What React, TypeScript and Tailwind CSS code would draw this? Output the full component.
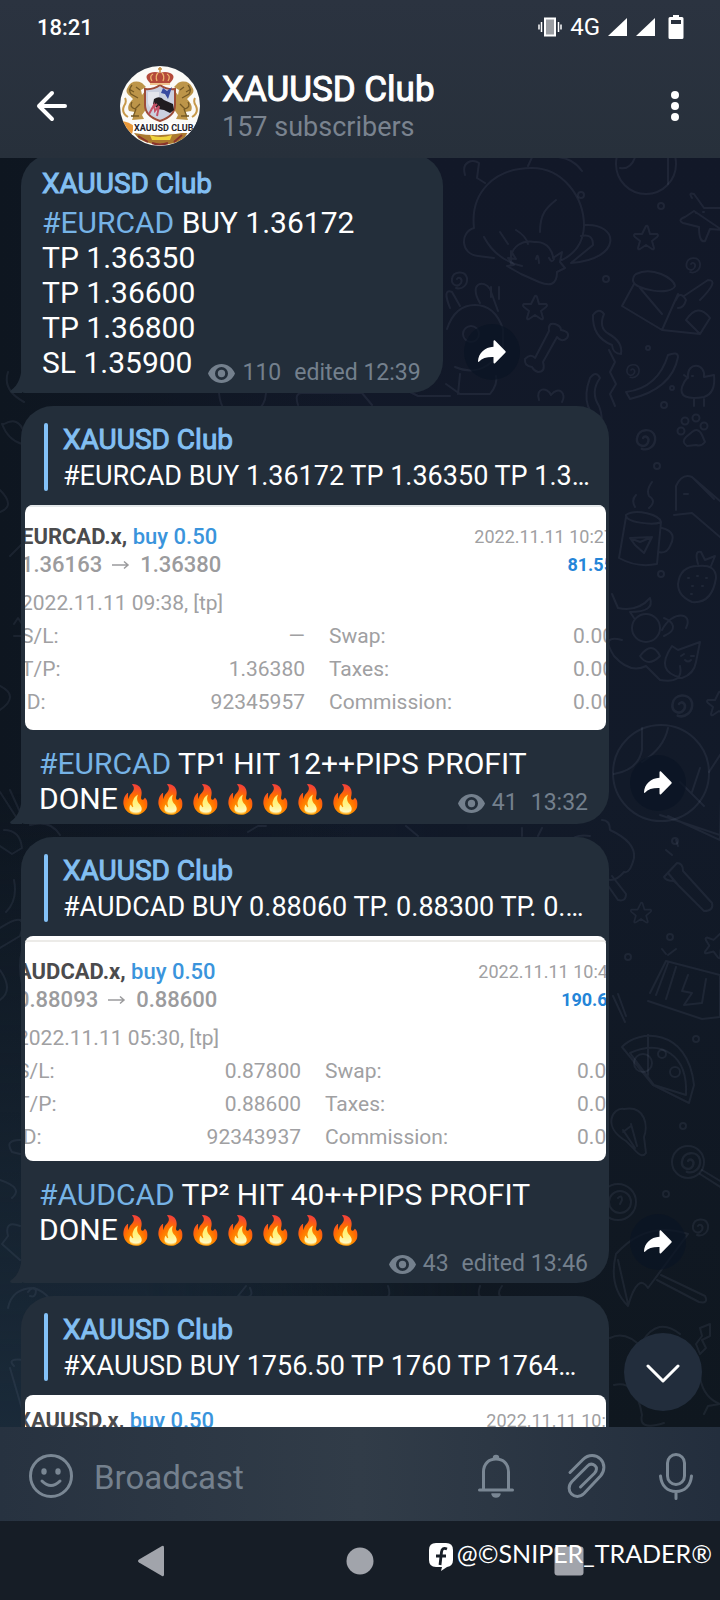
import React from "react";

const FLAMES = "🔥🔥🔥🔥🔥🔥🔥";

type Trade = {
  symbol: string;
  volume: string;
  open: string;
  close: string;
  closedAt: string;
  openedAt: string;
  profit: string;
  rows: [string, string, string, string][];
  frame: string;
};

const TRADES: Record<string, Trade> = {
  eurcad: {
    symbol: "EURCAD.x,",
    volume: "buy 0.50",
    open: "1.36163",
    close: "1.36380",
    closedAt: "2022.11.11 10:27",
    openedAt: "2022.11.11 09:38, [tp]",
    profit: "81.55",
    rows: [
      ["S/L:", "—", "Swap:", "0.00"],
      ["T/P:", "1.36380", "Taxes:", "0.00"],
      ["ID:", "92345957", "Commission:", "0.00"],
    ],
    frame: "-ml-1 -mr-2 pt-4 border-t-2 border-[#e4e8ea]",
  },
  audcad: {
    symbol: "AUDCAD.x,",
    volume: "buy 0.50",
    open: "0.88093",
    close: "0.88600",
    closedAt: "2022.11.11 10:44",
    openedAt: "2022.11.11 05:30, [tp]",
    profit: "190.60",
    rows: [
      ["S/L:", "0.87800", "Swap:", "0.00"],
      ["T/P:", "0.88600", "Taxes:", "0.00"],
      ["ID:", "92343937", "Commission:", "0.00"],
    ],
    frame: "-ml-2 -mr-3 mt-1 pt-4 border-t-2 border-[#ecebe8]",
  },
  xauusd: {
    symbol: "XAUUSD.x,",
    volume: "buy 0.50",
    open: "1756.50",
    close: "1764.00",
    closedAt: "2022.11.11 10:52",
    openedAt: "2022.11.11 10:02, [tp]",
    profit: "375.00",
    rows: [
      ["S/L:", "—", "Swap:", "0.00"],
      ["T/P:", "1764.00", "Taxes:", "0.00"],
      ["ID:", "92346120", "Commission:", "0.00"],
    ],
    frame: "-ml-2 -mr-5 pt-3",
  },
};

function TradeCard({ trade }: { trade: Trade }) {
  return (
    <div className="ml-1 mr-[3px] h-[225px] overflow-hidden rounded-lg bg-white text-[21px] text-[#a0a0a2]">
      <div className={trade.frame}>
        <div className="flex justify-between">
          <div className="text-[22px] leading-7 whitespace-nowrap">
            <div className="font-medium text-[#3a94dc]">
              <strong className="font-bold text-[#4b4b4d]">{trade.symbol}</strong> {trade.volume}
            </div>
            <div className="flex items-center gap-[10px] font-medium text-[#9b9b9d]">
              <span>{trade.open}</span>
              <svg viewBox="0 0 18 10" className="h-[10px] w-[18px]" fill="none" stroke="currentColor" strokeWidth="1.5">
                <path d="M0 5H16M12 1.5 16 5 12 8.500" />
              </svg>
              <span>{trade.close}</span>
            </div>
          </div>
          <div className="text-right text-[18px] leading-7 whitespace-nowrap">
            <div>{trade.closedAt}</div>
            <div className="font-bold text-[#2485d8]">{trade.profit}</div>
          </div>
        </div>
        <div className="mt-2 leading-[33px]">{trade.openedAt}</div>
        <table className="w-full table-fixed leading-[33px]">
          <tbody>
            {trade.rows.map(([a, b, c, d]) => (
              <tr key={a}>
                <th scope="row" className="w-[62px] p-0 text-left font-normal">{a}</th>
                <td className="w-[222px] p-0 text-right">{b}</td>
                <th scope="row" className="p-0 pl-6 text-left font-normal">{c}</th>
                <td className="p-0 text-right">{d}</td>
              </tr>
            ))}
          </tbody>
        </table>
      </div>
    </div>
  );
}

function Meta({ views, time }: { views: string; time: string }) {
  return (
    <span className="flex items-center gap-[7px] text-[23px] leading-7 whitespace-pre text-[#74808d]">
      <svg viewBox="0 0 27 19" className="h-[19px] w-[27px]" aria-hidden="true">
        <path fill="currentColor" fillRule="evenodd" d="M13.500 0C7.400 0 2.200 3.900 0 9.500 2.200 15.100 7.400 19 13.500 19S24.800 15.100 27 9.500C24.800 3.900 19.600 0 13.500 0Zm0 16A6.500 6.500 0 1 1 13.500 3a6.500 6.500 0 0 1 0 13Zm0-2.800a3.700 3.700 0 1 0 0-7.400 3.700 3.700 0 0 0 0 7.400Z" />
      </svg>
      <span>{views}</span>
      <span className="pl-[6px]">{time}</span>
    </span>
  );
}

function Tail() {
  return (
    <svg viewBox="0 0 12 30" className="absolute bottom-0 -left-[11px] h-[30px] w-3" aria-hidden="true">
      <path d="M12 0C11.500 13 9 22 .6 27.500-.3 28.600.3 30 2 30H12Z" fill="#232e3a" />
    </svg>
  );
}

function Row({ wide, children }: { wide?: boolean; children: React.ReactNode }) {
  return (
    <article className="flex items-end gap-[21px] pr-[34px] pl-[21px]">
      <div
        className={
          (wide ? "min-w-0 flex-1 " : "") +
          "relative rounded-t-[32px] rounded-br-[32px] rounded-bl-sm bg-[#232e3a]"
        }
      >
        {children}
        <Tail />
      </div>
      <button aria-label="Share" className="mb-[13px] flex size-14 shrink-0 items-center justify-center rounded-full bg-[#0a1423]/70 text-white">
        <svg viewBox="0 0 28 24" className="h-6 w-7" fill="currentColor">
          <path d="M15.500 1.200c0-.9.9-1.300 1.500-.7l10.300 10.400c.6.600.6 1.300 0 1.900L17 23.300c-.6.600-1.500.2-1.500-.7V17C9 16.800 4 18.200 1.200 21.600c-.5.600-1.300.3-1.200-.5C.6 13 6.500 7.300 15.500 6.700Z" />
        </svg>
      </button>
    </article>
  );
}

function SenderName() {
  return (
    <div className="text-[28px] leading-[34px] font-normal text-[#82bff2] [-webkit-text-stroke:1px_currentColor]">XAUUSD Club</div>
  );
}

function Reply({ text }: { text: string }) {
  return (
    <div className="pt-[17px] pr-3 pb-[14px] pl-[23px]">
      <blockquote className="flex h-[68px] gap-[15px]">
        <span className="w-1 shrink-0 rounded-full bg-[#83c1f7]" />
        <div className="min-w-0 flex-1">
          <SenderName />
          <div className="truncate text-[27px] leading-[39px]">{text}</div>
        </div>
      </blockquote>
    </div>
  );
}

function Tag({ children }: { children: string }) {
  return <a href="#tag" className="text-[#76b3e6]">{children}</a>;
}

function Emojis() {
  return <span className="text-[28px] leading-none">{FLAMES}</span>;
}

const Spiral = ({ x, y, s = 1 }: { x: number; y: number; s?: number }) => (
  <path transform={`translate(${x} ${y}) scale(${s})`} d="M0 0c2-3 6 0 4 4-3 5-10 2-9-4 1-8 13-9 15-1 1 7-5 12-11 10" />
);
const Star = ({ x, y, s = 1, r = 0 }: { x: number; y: number; s?: number; r?: number }) => (
  <path transform={`translate(${x} ${y}) rotate(${r}) scale(${s})`} d="M0-12Q1-13 2-11L4-4 11-4Q13-3 11-1L6 3 8 10Q8 12 6 11L0 7-6 11Q-8 12-8 10L-6 3-11-1Q-13-3-11-4L-4-4Z" />
);

function Doodles() {
  return (
    <svg viewBox="0 158 720 1269" preserveAspectRatio="xMidYMin slice" className="absolute inset-0 h-full w-full" aria-hidden="true" fill="none" stroke="#8fa0bc" strokeOpacity=".1" strokeWidth="2" strokeLinecap="round" strokeLinejoin="round">
      <path d="M474 228c-4-35 20-60 58-60 30 0 52 28 52 58-1 24-18 32-22 34M474 228c-14 4-14 26 4 28l16 2M484 237q12 23 38 29M585 225c34-2 38 34-14 38l22-18q0-12-12-9M465 175c-4-14 8-16 14-12l-2 15 8 5M528 166l6-13m24 4q16 2 24 14M540 232c0-18 6-24 16-32" />
      <path d="M511 264c-2-20 14-24 24-22 14-1 18 12 18 16l9-6-2 10 5 6-8 4c0 14-8 14-18 10l-18-8-14-8 7-1-6-7 8 1-5-8ZM536 259q2-8 3 4M549 258q3 6 5 1M500 232l8 12m8-14q10 6 12 14" />
      <circle cx="646" cy="164" r="30" /><path d="M620 168q12 2 16-14M668 144v40" />
      <path d="M692 198q-4-6 2-4l10 14h18m0 22-12-1-5 12q-6 2-6-14l-16-4q-6-3 2-6l9-6ZM696 213h1m6-1h1" />
      <Star x={646} y={238} /><Star x={535} y={308} /><Spiral x={457} y={279} /><Spiral x={691} y={264} s={0.900} />
      <path d="M636 274c16-8 38 4 39 12-4 10-40 4-42-5q0-5 3-7Zm-2 10-12 22 40 24 16-36M640 288l22 26m22-18 24-16q12 0-8 20M662 330l38 4 10-16q-12-16-24 2l14 14M676 300q4-10 10 0-2 8-8 8" />
      <path d="M447 329q8-24 28-24t28 24v20q-20 30-48 18M450 308q-8-20 2-16l8 14m20-3c-12-20 4-24 10-14l8 22m-7-14v-10m8 12v-12M446 384l14 10h30q8-10 6-18M460 374l-2 20" /><circle cx="471" cy="334" r="8" />
      <path d="M549 331q-1-9 6-7 6 2 6 6 10 2 6 8-5 5-10-1l-14 25q3 10-5 10-4-1-6-5-8-1-7-8 6-6 10-1Z" />
      <path d="M593 315q6-8 11-1-6 14 5 20 14 8 12 20-8 0-9-9-20-8-19-30ZM590 378q6-8 10 0-10 14-1 28 6 16-2 20m-7-48q-6 16-2 28l8 18M609 350l6 12-5 10 6 12-6 10 5 12M626 392q32-4 42-37 10-4 10 2-6 32-48 42Z" />
      <Spiral x={631} y={370} s={0.800} /><circle cx="648" cy="348" r="2" /><circle cx="672" cy="388" r="2" /><circle cx="664" cy="405" r="3" />
      <path d="M688 377c-1-16 18-14 16 0l10-2q2 18-10 22-26 4-22-10 2-6 6-10ZM684 375l4 3m6 21v7m10-7v7M692 376h1" />
      <Spiral x={643} y={438} s={1.200} /><path d="M539 400c-4-12 8-14 12-5 8-10 16-1 11 7" />
      <path d="M692 424q6-5 10 3l3 7q-4 5-9 3l-9 1q-6-4-1-9Z" transform="translate(0 8)" /><circle cx="681" cy="431" r="3.500" /><circle cx="685" cy="421" r="3.500" /><circle cx="696" cy="418" r="3.500" /><circle cx="704" cy="426" r="3.500" />
      <path d="M676 510v-24q6-13 16-9l28 24m0 36-28-24-18 2M692 477l22 22M684 494h4" />
      <path d="M626 515c10-7 34 0 35 7-8 4-36 0-35-7Zm0 2-7 41q18 10 38 6l4-42m1 6q16 4 8 18-3 8-12 6M630 538l22-1-8 16-9-8Zm0 0 10 4 12-5M635 507q-4-7 1-12m13 13q8-7 0-12-3-6 3-14" />
      <path d="M678 584q2-18 20-18 18-2 18 12-4 26-24 24-14-6-14-18ZM698 564q-4-14 3-12l4 8 10-4-4 10M688 578h1m8-2h1m8 2h1m-15 8h1m9 0h1m-12 8h1" />
      <circle cx="646" cy="628" r="14" /><path d="M612 594l6 14q20 4 32-10 5 14-20 14l4 6m28 12c10-20 32-18 24-2m-22 8c14-6 10-14 0-18M622 640q-22-6-8 16 16 18 32 10l14 14q24 4 20-14M672 646l6 4 22-8-4 20q-2 12-14 16-28-6-10-32ZM681 656l3-2m7 2h3m-9 4q3 3 6 0M640 656q12-16 20 0-12 12-20 0Z" />
      <Spiral x={679} y={704} s={1.300} /><Star x={719} y={704} />
      <circle cx="661" cy="773" r="48" /><path d="M642 728v22q-4 20-28 24m54-46q-4 20-26 34M709 772l13-20-2 88-52-24m-8-1 60 20M704 806l-24-24m12 10 8-24" />
      <path d="M602 820q8 0 8 10 26 12 24 28-4 16-10 14-10 12-20 6m8-2 14 18q0 8-8 6l-14-20" />
      <path d="m664 877 13-14q6 0 6 8l29 32q2 8-8 8l-30-30q-8 0-10-4Zm4-4 10 12M672 855l-6-5m12-4-2-6" />
      <Star x={641} y={913} s={0.850} /><circle cx="670" cy="937" r="3" /><circle cx="628" cy="957" r="3" /><Star x={716} y={945} r={20} />
      <path d="M650 993l16-32 54 14v42l-18 2-54-18m20-38-12 32m20-28-10 32M688 975l-6 16 10 2-8 12 18-2 4-24M668 955l8-6m-14 0 4 5M618 994l8 22m-13-20 12 26" />
      <path d="M622 1047c16-18 66-20 72 38l-5 18-36-18Zm8 6 24 32 32 10c2-40-24-56-56-42M648 1035v40" /><circle cx="643" cy="1063" r="9" /><circle cx="662" cy="1054" r="4" /><circle cx="675" cy="1072" r="5" />
      <path d="m634 1149-8-8c-24-14-14-34-2-32 22-4 24 18 20 28l2 16q-4 6-12-4ZM623 1130l12 18m-4-24 6 22m-14-14 8-6" />
      <circle cx="688" cy="1162" r="16" /><Spiral x={688} y={1161} s={1.200} /><path d="M702 1170l20 12m-22-8 22 14" />
      <circle cx="618" cy="1202" r="18" /><circle cx="620" cy="1202" r="11" /><path d="M618 1198q4-4 4 2l-2 4" /><Spiral x={698} y={1226} />
      <path d="M616 1254q30-34 72-20l-40 54q-10-16-20 18-20-20-12-52Zm45 21 44 21q4 8-6 6l-42-22M618 1260l10 44" />
      <path d="M700 1328l10-4v12l-8 4 4 8-6 6-4-10 6-8ZM610 1338q16-8 32 10m0-6q16-26 38-8M700 1378q4 20 20 26l-12 2-4 8M614 1385q22-6 28 30-4 16 22 8" />
      <path d="M8 1308q4-20 26-20 18 6 22 26M28 1292q4-6 8-2 0 8-6 6M14 1366q-8-8 10-6l10 6M10 1368l14 48M4 424q14-8 20 8l-2 12q-14-4-20-20ZM0 490q16 16 0 22M10 556l12-12m-8 80 4-6 4 6 6-2-4 8 4 6H14M0 686q20 10 0 24M10 790l10 22M0 792l18 28M4 830q16 0 18 18l-10 6-12-8M14 880q4 20-8 32M0 928q30-20 20 8L0 948M22 950q-4 16 0 34M0 970q14 20 0 30M20 1140q-16 0-8 12l8 2M0 1180q24 8 12 18M20 1226q-16-6-12 10l-6 8 18 16" />
      <path d="M8 372q-6 18 16 30M219 393q2 24 22 24 24-4 25-24M298 405q-4-12 4-12h60l10 12M410 392l8 4h32M30 825q20-6 30 10M248 832l10-6h8m140 0 12 10m104-8v8m16 0 4-8m28 14q4-8 20-6M246 1286l-8 10q18 4 12-8M388 1286q4 12-4 12h54M480 1286q-4 12 4 12m18-12q-6 8 0 12" />
      <circle cx="581" cy="195" r="3" /><circle cx="661" cy="206" r="3" /><circle cx="606" cy="279" r="3" /><circle cx="657" cy="466" r="3" /><circle cx="661" cy="574" r="3" /><circle cx="675" cy="841" r="3" /><circle cx="696" cy="1039" r="3" /><circle cx="683" cy="1126" r="3" /><circle cx="666" cy="1194" r="3" />
    </svg>
  );
}

function Avatar() {
  const lion = (
    <g>
      <path d="M22 17c-6-3-12-1-14 4-3 4-1 7 2 9l3 3c-4 4-6 8-4 12l6 1-3 8 12-1-2-4 5-7-2-8 6-9-5-1-4 5-1-5 5-3Z" fill="#bd9549" />
      <path d="M12 19q-4 5-1 9l7 4m-6 4q-3 5 3 7l5-5m-4-17 4 3m-9 26h8M9 23l5 3m2 17-3 8" fill="none" stroke="#765a25" strokeWidth="1.300" />
      <path d="M8 51q-7-4-4-11 3-4 1-8" fill="none" stroke="#c7994b" strokeWidth="2" />
    </g>
  );
  return (
    <svg viewBox="0 0 80 80" className="size-20 shrink-0 rounded-full bg-[#fbfaf7]" role="img" aria-label="XAUUSD Club">
      {lion}
      <g transform="translate(80 0) scale(-1 1)">{lion}</g>
      <path d="M25 23q8 1 15-4 7 5 15 4v16q0 11-15 16-15-5-15-16Z" fill="#cbd0e0" stroke="#9d4c38" strokeWidth="2" />
      <path d="M28 26h11v22q-9-4-11-11Z" fill="#e4e5ec" />
      <path d="m43 22 4 3 5-4-2 6-2 6-3-5-4-1Z" fill="#394aa0" />
      <path d="M34 33q6-4 10 1l9 4 1 6-4 3-6-3-6-1-5-5Z" fill="#201c20" />
      <path d="m29 48 5-9 1 6 4-5-2 10M37 38l-5 4" fill="none" stroke="#c45066" strokeWidth="2" />
      <path d="M30 17q-7-7 0-10 5-2 10 0 5-2 10 0 7 3 0 10Z" fill="#b44a3a" />
      <path d="M32 15q-3-5 1-7m4 7q-2-5 1-8m5 8q2-5-1-8m6 8q3-5-1-7M30 18h20" fill="none" stroke="#edb36b" strokeWidth="1.300" />
      <path d="M40 1v6m-2-4h4" stroke="#c58b3c" strokeWidth="1.500" />
      <path d="M2 55q7 1 12 5l-2 8q-7-4-10-13Z" fill="#e8983a" />
      <path d="M14 67q26 5 54-1l-5 8q-23 10-44-1Z" fill="#ab792f" />
      <path d="M30 69q10 4 22 0l-2 5H32Z" fill="#f0d43d" />
      <path d="m18 70 10 6m34-7-8 7m-22 1q8 3 16 0" stroke="#8b332c" strokeWidth="2" fill="none" />
      <path d="M13 57h64v10H13Z" fill="#fff" />
      <text x="14" y="65" fontSize="9" fontWeight="700" fill="#25232b" fontFamily="Roboto, sans-serif">XAUUSD CLUB</text>
    </svg>
  );
}

export default function App() {
  return (
    <div className="relative flex h-screen flex-col overflow-hidden bg-[#161d26] font-[Roboto,'Noto_Sans',sans-serif] text-white">
      <header className="z-10 bg-linear-to-b from-[#2b3340] to-[#27303b]">
        <div className="flex h-[54px] items-center justify-between pr-9 pl-[37px] text-[22px] font-medium">
          <time>18:21</time>
          <div className="flex items-center gap-2">
            <svg viewBox="0 0 24 20" className="h-5 w-6" fill="none" stroke="#fff" strokeWidth="1.500" aria-label="Vibrate">
              <rect x="7" y="1.500" width="10" height="17" fill="#9a9da2" strokeWidth="2" />
              <path d="M3.500 5v10M1 7.500v5M20.500 5v10M23 7.500v5" />
            </svg>
            <span className="text-[24px] font-normal">4G</span>
            <svg viewBox="0 0 20 18" className="h-[18px] w-5" fill="#fff" aria-label="Signal"><path d="M0 18 19 0V18Z" /></svg>
            <svg viewBox="0 0 20 18" className="h-[18px] w-5" fill="#fff" aria-label="Signal"><path d="M0 18 19 0V18Z" /></svg>
            <svg viewBox="0 0 16 24" className="ml-1 h-6 w-4" aria-label="Battery">
              <path d="M5 0h6v2h3q1.500 0 1.500 1.500v19q0 1.500-1.500 1.500H2Q.5 24 .5 22.500v-19Q.5 2 2 2h3Z" fill="#fff" /><path d="M3 5h10v4H3Z" fill="#29313d" />
            </svg>
          </div>
        </div>
        <div className="flex h-[104px] items-center pr-9 pl-9">
          <button aria-label="Back">
            <svg viewBox="0 0 32 32" className="size-8" fill="none" stroke="#fff" strokeWidth="4" strokeLinecap="round" strokeLinejoin="round"><path d="M16 3 3 16l13 13M3 16h26" /></svg>
          </button>
          <div className="ml-[52px]"><Avatar /></div>
          <div className="ml-[22px] min-w-0 flex-1 pt-1">
            <h1 className="text-[35px] leading-[38px] font-normal [-webkit-text-stroke:1px_currentColor]">XAUUSD Club</h1>
            <p className="text-[27px] leading-9 text-[#7a838f]">157 subscribers</p>
          </div>
          <button aria-label="Menu" className="px-1">
            <svg viewBox="0 0 10 32" className="h-8 w-[10px]" fill="#fff"><circle cx="5" cy="5" r="4" /><circle cx="5" cy="16" r="4" /><circle cx="5" cy="27" r="4" /></svg>
          </button>
        </div>
      </header>

      <main className="relative min-h-0 flex-1 overflow-hidden bg-linear-to-b from-[#121828] via-[#121a29] to-[#0f171f]">
        <div className="absolute inset-y-0 left-0 w-1/2 bg-linear-to-r from-[#0e1620] to-transparent" />
        <div className="absolute bottom-0 left-0 h-1/2 w-2/3 bg-linear-to-t from-[#1a2a39] to-transparent mask-r-from-30%" />
        <Doodles />
        <div className="relative -mt-1 flex flex-col gap-[13px] text-[30px] leading-[35px]">
          <Row>
            <div className="pt-[13px] pr-[22px] pb-[6px] pl-[21px]">
              <SenderName />
              <div className="pt-1">
                <div><Tag>#EURCAD</Tag> BUY 1.36172</div>
                <div>TP 1.36350</div>
                <div>TP 1.36600</div>
                <div>TP 1.36800</div>
                <div className="flex items-end gap-4">
                  <span className="pb-[7px]">SL 1.35900</span>
                  <Meta views="110" time="edited 12:39" />
                </div>
              </div>
            </div>
          </Row>

          <Row wide>
            <Reply text="#EURCAD BUY 1.36172 TP 1.36350 TP 1.36600 TP 1.36800" />
            <TradeCard trade={TRADES.eurcad} />
            <div className="pt-4 pr-[21px] pb-1 pl-[18px]">
              <div><Tag>#EURCAD</Tag> TP¹ HIT 12++PIPS PROFIT</div>
              <div className="flex items-start justify-between">
                <span className="pb-1">DONE<Emojis /></span>
                <div className="pt-2"><Meta views="41" time="13:32" /></div>
              </div>
            </div>
          </Row>

          <Row wide>
            <Reply text="#AUDCAD BUY 0.88060 TP. 0.88300 TP. 0.88600" />
            <TradeCard trade={TRADES.audcad} />
            <div className="pt-4 pr-[21px] pb-[5px] pl-[18px]">
              <div><Tag>#AUDCAD</Tag> TP² HIT 40++PIPS PROFIT</div>
              <div>DONE<Emojis /></div>
              <div className="flex justify-end pt-[3px]"><Meta views="43" time="edited 13:46" /></div>
            </div>
          </Row>

          <Row wide>
            <Reply text="#XAUUSD BUY 1756.50 TP 1760 TP 1764…" />
            <TradeCard trade={TRADES.xauusd} />
          </Row>
        </div>
        <button aria-label="Scroll to bottom" className="absolute right-[18px] bottom-4 flex size-[78px] items-center justify-center rounded-full bg-[#222d3c]">
          <svg viewBox="0 0 34 20" className="mt-1 h-5 w-[34px]" fill="none" stroke="#fff" strokeWidth="3" strokeLinecap="round" strokeLinejoin="round"><path d="M2 2 17 17 32 2" /></svg>
        </button>
      </main>

      <footer className="z-10">
        <form className="flex h-[94px] items-center bg-linear-to-r from-[#273240] via-[#313c48] to-[#232e3d] pt-1 pr-[26px] pl-[29px] text-[#7a8794]" onSubmit={(e) => e.preventDefault()}>
          <button type="button" aria-label="Emoji">
            <svg viewBox="0 0 44 44" className="size-11" fill="none" stroke="currentColor" strokeWidth="3" strokeLinecap="round">
              <circle cx="22" cy="22" r="20.500" /><path d="M13 27q9 9 18 0" /><ellipse cx="15" cy="17.500" rx="2.700" ry="3.200" fill="currentColor" stroke="none" /><ellipse cx="29" cy="17.500" rx="2.700" ry="3.200" fill="currentColor" stroke="none" />
            </svg>
          </button>
          <input aria-label="Broadcast" placeholder="Broadcast" className="mt-1 ml-[21px] min-w-0 flex-1 bg-transparent text-[33px] leading-10 outline-none placeholder:text-[#74808d]" />
          <button type="button" aria-label="Notifications">
            <svg viewBox="0 0 38 44" className="h-11 w-[38px]" fill="none" stroke="currentColor" strokeWidth="3" strokeLinejoin="round" strokeLinecap="round">
              <path d="M2.500 36h33M6.500 35V18C6.500 9.500 12 5 19 5s12.500 4.500 12.500 13v17" /><path d="M16.500 4a2.500 2.500 0 0 1 5 0M15 40h8q-1 3-4 3t-4-3Z" fill="currentColor" strokeWidth="1.500" />
            </svg>
          </button>
          <button type="button" aria-label="Attach" className="ml-[52px]">
            <svg viewBox="0 0 40 44" className="h-11 w-10" fill="none" stroke="currentColor" strokeWidth="3" strokeLinecap="round" strokeLinejoin="round">
              <path d="M3 18.500 16 5.500C21.500 0 29 .5 33.500 5s4.500 12 0 17L17 39.500c-4 4-9.500 3.500-12.500.5s-3.500-8.500.5-12.500L20.500 12c2.500-2.500 5.500-2 7.500-.3s2 5-.5 7.500L13.500 33" />
            </svg>
          </button>
          <button type="button" aria-label="Record voice" className="ml-[51px]">
            <svg viewBox="0 0 36 48" className="h-12 w-9" fill="none" stroke="currentColor" strokeWidth="3" strokeLinecap="round">
              <rect x="9.500" y="2.500" width="17" height="30" rx="8.500" /><path d="M2.500 24c1 10 7 15.500 15.500 15.500S32.500 34 33.500 24M18 40v6.500" />
            </svg>
          </button>
        </form>
        <nav className="relative flex h-[79px] items-center justify-around bg-[#161d26] px-[46px] text-[#a1a4ab]">
          <button aria-label="Back"><svg viewBox="0 0 32 32" className="size-8" fill="currentColor"><path d="M4 14.500 27 1q2-1 2 1.500v27q0 2.500-2 1.500L4 17.500q-2-1.500 0-3Z" /></svg></button>
          <button aria-label="Home"><svg viewBox="0 0 32 32" className="size-8" fill="currentColor"><circle cx="16" cy="16" r="13.500" /></svg></button>
          <button aria-label="Recents"><svg viewBox="0 0 32 32" className="size-8" fill="currentColor"><rect x="1.500" y="1.500" width="29" height="29" rx="3" /></svg></button>
          <div className="absolute top-[14px] right-2 flex items-center gap-1 font-[Lato,sans-serif] text-[25px] leading-8 text-white">
            <svg viewBox="0 0 24 28" className="mt-2 h-7 w-6" aria-label="Facebook">
              <path d="M7 0h10q7 0 7 7v10q0 6-6 7l-6 4 1-4H7q-7 0-7-7V7q0-7 7-7Z" fill="#fff" />
              <path d="M18 6q-5-2-5.500 3L11 22M7 13h10" fill="none" stroke="#161d26" strokeWidth="2.800" />
            </svg>
            <span>@©SNIPER_TRADER®</span>
          </div>
        </nav>
      </footer>
    </div>
  );
}
